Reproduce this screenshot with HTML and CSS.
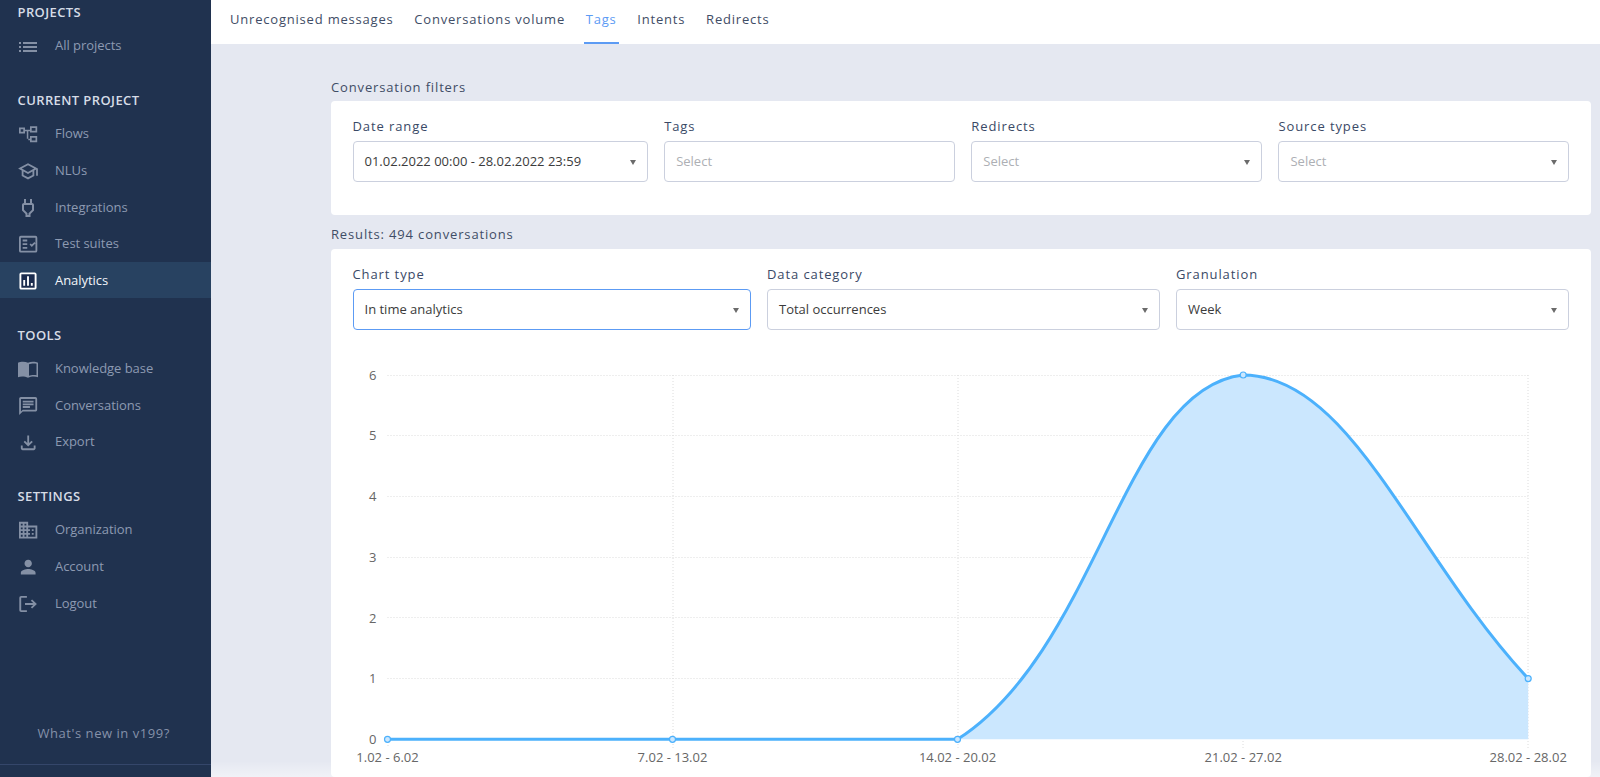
FILE: index.html
```html
<!DOCTYPE html>
<html lang="en">
<head>
<meta charset="utf-8">
<title>Analytics</title>
<link rel="stylesheet" href="styles.css">
</head>
<body>
<aside class="sidebar">
  <section class="nav-section">
    <h3 class="nav-title">PROJECTS</h3>
    <a class="nav-item"><svg class="nav-icon" viewBox="0 0 24 24"><path transform="translate(0 1.9)" d="M3 13h2v-2H3v2zm0 4h2v-2H3v2zm0-8h2V7H3v2zm4 4h14v-2H7v2zm0 4h14v-2H7v2zM7 7v2h14V7H7z"/></svg>All projects</a>
  </section>
  <section class="nav-section">
    <h3 class="nav-title">CURRENT PROJECT</h3>
    <a class="nav-item"><svg class="nav-icon" viewBox="0 0 24 24"><path fill-rule="evenodd" d="M3 6.500h6v6H3zM4.700 8.200v2.600h2.600V8.200zM14 5.200h7.200v6.300H14zM15.700 6.900v2.900h3.800V6.900zM14 15h7.200v6.300H14zM15.700 16.700v2.900h3.800v-2.900zM9 8.700h5v1.500H9zM10.800 10.200h1.500v7.500h-1.500zM12.300 17.700H14v1.500h-1.700z"/></svg>Flows</a>
    <a class="nav-item"><svg class="nav-icon" viewBox="0 0 24 24"><path transform="translate(12 13.300) scale(.9) translate(-12 -12)" d="M12 3L1 9l4 2.180v6L12 21l7-3.820v-6l2-1.090V17h2V9L12 3zm6.820 6L12 12.720 5.180 9 12 5.280 18.820 9zM17 15.990l-5 2.730-5-2.730v-3.720L12 15l5-2.730v3.720z"/></svg>NLUs</a>
    <a class="nav-item"><svg class="nav-icon" viewBox="0 0 24 24"><path transform="translate(0 1)" d="M16 9v4.660l-3.500 3.510V19h-1v-1.830L8 13.650V9h8m0-6h-2v4h-4V3H8v4h-.01C6.900 7 6 7.900 6 8.990v5.490L9.500 18v3h5v-3l3.500-3.510V9c0-1.100-.9-2-2-2V3z"/></svg>Integrations</a>
    <a class="nav-item"><svg class="nav-icon" viewBox="0 0 24 24"><path transform="translate(12.150 13.150) scale(.915 .925) translate(-12 -12)" fill-rule="evenodd" d="M4 3h16a2 2 0 0 1 2 2v14a2 2 0 0 1-2 2H4a2 2 0 0 1-2-2V5a2 2 0 0 1 2-2zm0 2v14h16V5H4zm2 2h5v2H6V7zm0 4h5v2H6v-2zm0 4h5v2H6v-2zm7.500-2.500l1.300-1.300 1.200 1.200 2.800-2.800 1.300 1.300-4.100 4.100-2.500-2.500z"/></svg>Test suites</a>
    <a class="nav-item is-active"><svg class="nav-icon" viewBox="0 0 24 24"><g transform="translate(12 13) scale(.95) translate(-12 -12)"><rect class="icon-well" x="4" y="4" width="16" height="16"/><path d="M19 3H5c-1.100 0-2 .9-2 2v14c0 1.100.9 2 2 2h14c1.100 0 2-.9 2-2V5c0-1.100-.9-2-2-2zm0 16H5V5h14v14zM7 11h2v6H7zm4-4h2v10h-2zm4 7h2v3h-2z"/></g></svg>Analytics</a>
  </section>
  <section class="nav-section">
    <h3 class="nav-title">TOOLS</h3>
    <a class="nav-item"><svg class="nav-icon" viewBox="0 0 24 24"><path transform="translate(0 1.200)" fill-rule="evenodd" d="M2 5.500C4.500 4.500 9 4.300 12 5.500c3-1.200 7.500-1 10 0V20c-2.500-1-7-1-10 .5C9 19 4.500 19 2 20V5.500zM13 7v11.500c2-.8 5.500-.9 7.500-.4V6.600C18.500 6 15 6.100 13 7z"/></svg>Knowledge base</a>
    <a class="nav-item"><svg class="nav-icon" viewBox="0 0 24 24"><path transform="translate(12.150 13.100) scale(.9) translate(-12 -12)" d="M20 2H4c-1.100 0-2 .9-2 2v18l4-4h14c1.100 0 2-.9 2-2V4c0-1.100-.9-2-2-2zm0 14H6l-2 2V4h16v12zM6 6h12v2H6zm0 3h12v2H6zm0 3h8v2H6z"/></svg>Conversations</a>
    <a class="nav-item"><svg class="nav-icon" viewBox="0 0 24 24"><path transform="translate(12.200 13.850) scale(.92) translate(-12 -12)" d="M18 15v3H6v-3H4v3c0 1.100.9 2 2 2h12c1.100 0 2-.9 2-2v-3h-2zm-1-4l-1.410-1.410L13 12.170V4h-2v8.170L8.410 9.590 7 11l5 5 5-5z"/></svg>Export</a>
  </section>
  <section class="nav-section">
    <h3 class="nav-title">SETTINGS</h3>
    <a class="nav-item"><svg class="nav-icon" viewBox="0 0 24 24"><path transform="translate(12.150 13.150) scale(.915 .925) translate(-12 -12)" d="M12 7V3H2v18h20V7H12zM6 19H4v-2h2v2zm0-4H4v-2h2v2zm0-4H4V9h2v2zm0-4H4V5h2v2zm4 12H8v-2h2v2zm0-4H8v-2h2v2zm0-4H8V9h2v2zm0-4H8V5h2v2zm10 12h-8v-2h2v-2h-2v-2h2v-2h-2V9h8v10zm-2-8h-2v2h2v-2zm0 4h-2v2h2v-2z"/></svg>Organization</a>
    <a class="nav-item"><svg class="nav-icon" viewBox="0 0 24 24"><path transform="translate(12.200 13.150) scale(.92) translate(-12 -12)" d="M12 12c2.210 0 4-1.790 4-4s-1.790-4-4-4-4 1.790-4 4 1.790 4 4 4zm0 2c-2.670 0-8 1.340-8 4v2h16v-2c0-2.660-5.330-4-8-4z"/></svg>Account</a>
    <a class="nav-item"><svg class="nav-icon" viewBox="0 0 24 24"><path transform="translate(11.850 13) scale(.95 .89) translate(-12 -12)" d="M11 3H5a2 2 0 0 0-2 2v14a2 2 0 0 0 2 2h6v-2H5V5h6V3zm5.500 4l-1.400 1.400 2.600 2.600H9v2h8.700l-2.600 2.600 1.400 1.400 5-5-5-5z"/></svg>Logout</a>
  </section>
  <footer class="nav-footer">What's new in v199?</footer>
</aside>
<div class="main">
  <nav class="tabs">
    <a class="tab">Unrecognised messages</a>
    <a class="tab">Conversations volume</a>
    <a class="tab is-active">Tags</a>
    <a class="tab">Intents</a>
    <a class="tab">Redirects</a>
  </nav>
  <main class="content">
    <h2 class="block-title block-title-filters">Conversation filters</h2>
    <section class="card card-filters">
      <div class="fields fields-four">
        <div class="field"><label class="field-label">Date range</label><div class="select"><span>01.02.2022 00:00 - 28.02.2022 23:59</span><i class="caret"></i></div></div>
        <div class="field"><label class="field-label">Tags</label><div class="select is-empty"><span>Select</span></div></div>
        <div class="field"><label class="field-label">Redirects</label><div class="select is-empty"><span>Select</span><i class="caret"></i></div></div>
        <div class="field"><label class="field-label">Source types</label><div class="select is-empty"><span>Select</span><i class="caret"></i></div></div>
      </div>
    </section>
    <h2 class="block-title block-title-results">Results: 494 conversations</h2>
    <section class="card">
      <div class="fields fields-three">
        <div class="field"><label class="field-label">Chart type</label><div class="select is-focused"><span>In time analytics</span><i class="caret"></i></div></div>
        <div class="field"><label class="field-label">Data category</label><div class="select"><span>Total occurrences</span><i class="caret"></i></div></div>
        <div class="field"><label class="field-label">Granulation</label><div class="select"><span>Week</span><i class="caret"></i></div></div>
      </div>
      <svg class="chart" viewBox="352.5 350 1216.5 427" width="1216.5" height="427">
        <g class="grid">
          <path d="M387 375.500H1527.700M387 435.500H1527.700M387 496.500H1527.700M387 557.500H1527.700M387 617.500H1527.700M387 678.500H1527.700"/>
          <path d="M672.500 375V748M957.500 375V748M1242.500 375V748M1527.500 375V748M387.500 739V748"/>
        </g>
        <g class="y-labels">
          <text x="376" y="379.500">6</text>
          <text x="376" y="440">5</text>
          <text x="376" y="501">4</text>
          <text x="376" y="561.500">3</text>
          <text x="376" y="622.500">2</text>
          <text x="376" y="683">1</text>
          <text x="376" y="744">0</text>
        </g>
        <path class="area" d="M957 739.300C1098.500 649 1122.600 387.800 1242.700 375C1350.900 375 1413.700 557.200 1527.700 678.600V739.300Z"/>
        <path class="line" d="M387 739.300H957C1098.500 649 1122.600 387.800 1242.700 375C1350.900 375 1413.700 557.200 1527.700 678.600"/>
        <g class="dots">
          <circle cx="387" cy="739.300" r="3"/>
          <circle cx="672" cy="739.300" r="3"/>
          <circle cx="957" cy="739.300" r="3"/>
          <circle cx="1242.700" cy="375" r="3"/>
          <circle cx="1527.700" cy="678.600" r="3"/>
        </g>
        <g class="x-labels">
          <text x="387" y="761.500">1.02 - 6.02</text>
          <text x="672" y="761.500">7.02 - 13.02</text>
          <text x="957" y="761.500">14.02 - 20.02</text>
          <text x="1242.700" y="761.500">21.02 - 27.02</text>
          <text x="1527.700" y="761.500">28.02 - 28.02</text>
        </g>
      </svg>
    </section>
  </main>
  <div class="bottom-fade"></div>
</div>
</body>
</html>
```

FILE: styles.css
```css
* { box-sizing: border-box; }
html, body { margin: 0; height: 777px; overflow: hidden; }
body {
  display: flex;
  font-family: "Open Sans", sans-serif;
  background: #e5e8f1;
  -webkit-font-smoothing: antialiased;
}

/* Sidebar */
.sidebar {
  width: 211px;
  height: 777px;
  flex: none;
  display: flex;
  flex-direction: column;
  background: #20324f;
}
.nav-section { margin-bottom: 24.6px; }
.nav-title {
  margin: 0 0 3px;
  padding-left: 17.5px;
  height: 24px;
  line-height: 24px;
  font-size: 13px;
  font-weight: 600;
  letter-spacing: 0.4px;
  color: #d6dce6;
}
.nav-item {
  display: flex;
  align-items: center;
  height: 36.6px;
  padding-left: 16px;
  font-size: 13px;
  letter-spacing: -0.04px;
  color: #8d9ab2;
}
.nav-icon {
  width: 24px;
  height: 24px;
  margin-right: 15px;
  flex: none;
  fill: #8490a5;
}
.nav-item.is-active { background: #284261; color: #f2f5f9; }
.nav-item.is-active .nav-icon { fill: #fff; }
.nav-item.is-active .nav-icon .icon-well { fill: #1b2c4e; }
.nav-footer {
  margin-top: auto;
  margin-bottom: 12px;
  height: 43px;
  padding: 0 0 20px 37.5px;
  line-height: 22px;
  font-size: 13px;
  letter-spacing: 0.55px;
  color: #8591a9;
  border-bottom: 1px solid #34466a;
}

/* Main column */
.main { position: relative; flex: 1; min-width: 0; height: 777px; overflow: hidden; }
.tabs {
  display: flex;
  gap: 20.75px;
  height: 44px;
  padding-left: 19px;
  background: #fff;
}
.tab {
  position: relative;
  line-height: 38px;
  font-size: 13px;
  letter-spacing: 0.8px;
  color: #3f4d66;
}
.tab.is-active { color: #5c9bf4; }
.tab.is-active::after {
  content: "";
  position: absolute;
  left: -2px;
  right: -2px;
  bottom: 0;
  height: 2px;
  background: #5c9bf4;
}
.content { padding: 0 9.500px 0 120px; }
.block-title {
  margin: 0;
  height: 20px;
  line-height: 19px;
  font-size: 13px;
  font-weight: 400;
  letter-spacing: 0.85px;
  color: #3f4d66;
}
.block-title-filters { margin-top: 34px; margin-bottom: 3px; }
.block-title-results { margin-top: 10px; margin-bottom: 4px; }
.card {
  padding: 16px 21.500px 0;
  background: #fff;
  border-radius: 4px;
}
.card-filters { height: 114px; }
.fields { display: grid; }
.fields-four { grid-template-columns: 295px 290.500px 290.500px 290.500px; column-gap: 16.670px; }
.fields-three { grid-template-columns: 398px 392.500px 393px; column-gap: 16.500px; }
.field-label {
  display: block;
  height: 20px;
  margin-bottom: 4px;
  line-height: 18px;
  font-size: 13px;
  letter-spacing: 0.9px;
  color: #3a4966;
}
.select {
  display: flex;
  align-items: center;
  justify-content: space-between;
  height: 41px;
  padding: 0 11px;
  border: 1px solid #cbd0de;
  border-radius: 4px;
  font-size: 13px;
  color: #3b3b3b;
}
.select span { margin-top: -2px; }
.select.is-empty { color: #adafb4; }
.select.is-focused { border-color: #5c9bf4; }
.caret {
  margin-top: 2px;
  border-left: 3px solid transparent;
  border-right: 3px solid transparent;
  border-top: 5px solid #6b6b6b;
}

/* Chart */
.chart { display: block; margin-top: 20px; overflow: visible; }
.grid path { fill: none; stroke: #dcdcdc; stroke-width: 1; stroke-dasharray: 1 2; }
.y-labels text { font-size: 13px; fill: #666; text-anchor: end; }
.x-labels text { font-size: 13px; fill: #666; text-anchor: middle; }
.area { fill: #cbe7fe; }
.line { fill: none; stroke: #4cb1fc; stroke-width: 3; }
.dots circle { fill: #cbe7fe; stroke: #4cb1fc; stroke-width: 1.200; }
.bottom-fade {
  position: absolute;
  left: 0;
  right: 0;
  bottom: 0;
  height: 16px;
  background: linear-gradient(rgba(255, 255, 255, 0), rgba(255, 255, 255, 0.45));
  pointer-events: none;
}
```
